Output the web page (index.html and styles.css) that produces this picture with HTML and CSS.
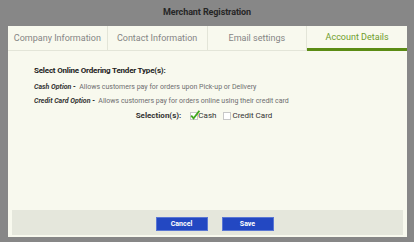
FILE: index.html
```html
<!DOCTYPE html>
<html>
<head>
<meta charset="utf-8">
<link rel="stylesheet" href="styles.css">
</head>
<body>
<div class="title">Merchant Registration</div>
<div class="panel">
  <div class="tabs">
    <div class="tab">Company Information</div>
    <div class="tab">Contact Information</div>
    <div class="tab">Email settings</div>
    <div class="tab active">Account Details</div>
  </div>
  <div class="content">
    <div class="heading">Select Online Ordering Tender Type(s):</div>
    <div class="line"><span class="label">Cash Option -</span>&nbsp; Allows customers pay for orders upon Pick-up or Delivery</div>
    <div class="line"><span class="label">Credit Card Option -</span>&nbsp; Allows customers pay for orders online using their credit card</div>
    <div class="selection">
      <span class="sel-label">Selection(s):</span>
      <span class="opt">
        <svg class="box" width="8" height="10" viewBox="0 0 8 10">
          <rect x="0.5" y="2.5" width="7" height="7" fill="#fff" stroke="#c8c8c8"/>
          <path d="M1.2 5.6 L3.6 8.4 L9.4 0.8" fill="none" stroke="#3fa81e" stroke-width="1.8"/>
        </svg>Cash</span>
      <span class="opt">
        <svg class="box" width="9" height="10" viewBox="0 0 9 10">
          <rect x="0.5" y="2.5" width="7" height="7" fill="#fff" stroke="#c8c8c8"/>
        </svg>Credit Card</span>
    </div>
  </div>
  <div class="footer">
    <button class="btn">Cancel</button>
    <button class="btn">Save</button>
  </div>
</div>
</body>
</html>
```
FILE: styles.css
```css
html, body {
  margin: 0;
  padding: 0;
}
body {
  background: #878787;
  font-family: Roboto, "Liberation Sans", sans-serif;
  width: 414px;
  height: 242px;
  overflow: hidden;
}
.title {
  height: 26px;
  line-height: 25px;
  text-align: center;
  font-weight: bold;
  font-size: 9px;
  letter-spacing: -0.1px;
  color: #262626;
}
.panel {
  margin: 0 7px 0 8px;
  height: 211px;
  background: #f8f9ee;
  display: flex;
  flex-direction: column;
  padding-bottom: 2px;
  box-sizing: border-box;
}
.tabs {
  display: grid;
  grid-template-columns: repeat(4, 1fr);
  height: 24px;
  border-bottom: 1px solid #e3e5d8;
}
.tab {
  border-right: 1px solid #e3e5d8;
  text-align: center;
  line-height: 24px;
  font-size: 9px;
  color: #858585;
}
.tab:last-child {
  border-right: none;
}
.tab.active {
  color: #6e9c2c;
  border-bottom: 3px solid #5b8c14;
  line-height: 23px;
  height: 22px;
}
.content {
  flex: 1;
  padding: 15px 0 0 26px;
  font-size: 7px;
  color: #6e6e6e;
}
.heading {
  font-weight: bold;
  font-size: 8px;
  letter-spacing: -0.2px;
  color: #222;
  margin-bottom: 5px;
}
.line {
  height: 14px;
  line-height: 14px;
}
.label {
  font-weight: bold;
  font-style: italic;
  color: #333;
}
.selection {
  display: flex;
  justify-content: center;
  align-items: center;
  gap: 7px;
  margin-left: -26px;
  padding-right: 7px;
  margin-top: 2px;
  font-size: 8px;
  color: #333;
}
.sel-label {
  font-weight: bold;
  margin-right: 2px;
}
.opt {
  display: inline-flex;
  align-items: center;
}
.box {
  overflow: visible;
  margin-right: 0;
}
.footer {
  margin: 0 4px;
  height: 25px;
  background: #e5e7dc;
  display: flex;
  justify-content: center;
  align-items: center;
  gap: 14px;
  padding-left: 14px;
}
.btn {
  width: 52px;
  height: 14px;
  padding: 0;
  border: 1px solid #5a77d4;
  background: #2348c2;
  color: #fff;
  font-family: Roboto, "Liberation Sans", sans-serif;
  font-size: 7px;
  font-weight: bold;
  margin-top: 2px;
}
```
